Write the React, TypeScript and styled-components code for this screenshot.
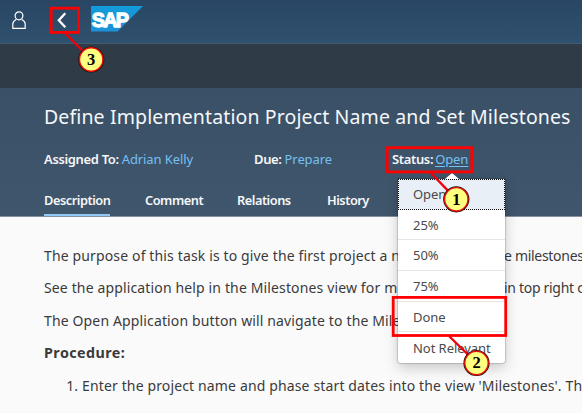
import React from "react";
import styled, { createGlobalStyle } from "styled-components";

const GlobalStyle = createGlobalStyle`
  * { box-sizing: border-box; }
  body { margin: 0; overflow: hidden; background: #fafafa; font-family: "Noto Sans", sans-serif; }
`;

const Page = styled.main`
  position: relative;
  width: 582px;
  height: 413px;
  overflow: hidden;
  background: #fafafa;
`;

const ShellBar = styled.header`
  display: flex;
  align-items: flex-start;
  height: 44px;
  background: linear-gradient(#294764, #2f506e);
  border-bottom: 1px solid #435a70;
`;

const UserIcon = styled.svg`
  width: 16px;
  height: 20px;
  margin: 10px 0 0 11px;
`;

const BackIcon = styled.svg`
  width: 12px;
  height: 18px;
  margin: 11px 0 0 29px;
`;

const Logo = styled.svg`
  width: 53px;
  height: 26px;
  margin: 6px 0 0 23px;
`;

const SubBar = styled.div`
  height: 44px;
  background: #2f3b47;
`;

const ObjectHeader = styled.section`
  height: 129px;
  padding-left: 44px;
  background: linear-gradient(#3a5067, #40566c);
  border-bottom: 1px solid #8492a1;
  color: #f5f7f9;
`;

const Title = styled.h1`
  margin: 0;
  padding-top: 15px;
  height: 56px;
  font-size: 19.5px;
  line-height: 28px;
  font-weight: 400;
  letter-spacing: 0.12px;
  white-space: nowrap;
`;

const Attributes = styled.div`
  display: grid;
  grid-template-columns: 210px 138px 1fr;
  height: 42px;
  padding-top: 6px;
  font-size: 13px;
  line-height: 18px;
  white-space: nowrap;
`;

const Label = styled.span<{ $tight?: boolean }>`
  font-weight: 600;
  letter-spacing: -0.35px;
  margin-right: ${(p) => (p.$tight ? "2px" : "3px")};
`;

const Link = styled.a<{ $active?: boolean }>`
  color: #76c0f2;
  letter-spacing: -0.1px;
  text-decoration: ${(p) => (p.$active ? "underline" : "none")};
  text-underline-offset: 2px;
`;

const Tabs = styled.nav`
  display: grid;
  grid-template-columns: 101px 92px 90px 1fr;
  height: 30px;
`;

const Tab = styled.div<{ $active?: boolean }>`
  justify-self: start;
  height: 30px;
  padding-top: 5px;
  font-size: 12.8px;
  line-height: 18px;
  font-weight: 600;
  letter-spacing: -0.48px;
  border-bottom: 2px solid ${(p) => (p.$active ? "#91c8f6" : "transparent")};
`;

const Content = styled.article`
  padding: 22.5px 0 0 44px;
  color: #3a3a3a;
  font-size: 14px;
  line-height: 32.6px;
  letter-spacing: 0.14px;
  white-space: nowrap;
`;

const Paragraph = styled.p`
  display: grid;
  grid-template-columns: 460px 1fr;
  margin: 0;
  height: 32.6px;
`;

const LineEnd = styled.span`
  letter-spacing: -0.3px;
`;

const Strong = styled.strong`
  display: block;
  height: 32.6px;
  font-size: 14.3px;
  letter-spacing: 0.45px;
`;

const Steps = styled.ol`
  margin: 0;
  padding-left: 38px;
`;

const Popover = styled.div`
  position: absolute;
  left: 398px;
  top: 179px;
  width: 107px;
  height: 184px;
  background: #fff;
  border-radius: 0 0 3px 3px;
  box-shadow: 0 0 1px 1px rgba(0, 0, 0, 0.16), 0 5px 14px rgba(0, 0, 0, 0.2);
  &::before {
    content: "";
    position: absolute;
    left: 47px;
    top: -6px;
    border: 7px solid transparent;
    border-top: 0;
    border-bottom: 6px solid #fff;
  }
`;

const MenuItem = styled.div<{ $selected?: boolean }>`
  height: 30.7px;
  padding: 5px 0 0 15px;
  font-size: 13px;
  line-height: 20px;
  letter-spacing: -0.05px;
  white-space: nowrap;
  color: #4a4a4a;
  background: ${(p) => (p.$selected ? "#e8eff7" : "transparent")};
  border-bottom: 1px solid #e5e5e5;
  ${(p) => (p.$selected ? "border: 1px dotted #111; padding: 4px 0 0 14px;" : "")}
  &:last-child { border-bottom: 0; padding-top: 5.3px; }
`;

const Annotations = styled.svg`
  position: absolute;
  inset: 0;
  width: 582px;
  height: 413px;
  pointer-events: none;
`;

const paragraphs = [
  ["The purpose of this task is to give the first project a nam", "e milestones"],
  ["See the application help in the Milestones view for more", "in top right corner"],
  ["The Open Application button will navigate to the Milestones", ""],
];

const callouts = [
  { n: 3, x: 51.2, y: 8.2, w: 27.3, h: 24.2, from: [65, 33], c: [91.2, 59.5] },
  { n: 1, x: 387.2, y: 147.7, w: 84.6, h: 24.2, from: [430, 172], c: [456.3, 199.3] },
  { n: 2, x: 393.2, y: 297.4, w: 112.5, h: 38.1, from: [449, 336], c: [476.5, 363] },
];

export default function App() {
  return (
    <Page>
      <GlobalStyle />
      <ShellBar>
        <UserIcon viewBox="0 0 16 20" fill="none" stroke="#fff" strokeWidth="1.2">
          <ellipse cx="8" cy="5.8" rx="3.9" ry="4" />
          <path d="M5.3 9.5C3.2 10.5 1.8 12 1.8 14v4.4h12.4V14c0-2-1.4-3.5-3.5-4.5" />
        </UserIcon>
        <BackIcon viewBox="0 0 12 18" fill="none" stroke="#fff" strokeWidth="2.3">
          <path d="M9.3 2.2 2.8 9.2l6.5 7" />
        </BackIcon>
        <Logo viewBox="0 0 53 26">
          <defs>
            <linearGradient id="logoFill" x1="0" y1="0" x2="0" y2="1">
              <stop offset="0" stopColor="#129bdc" />
              <stop offset="1" stopColor="#1d92d6" />
            </linearGradient>
          </defs>
          <path d="M0 0h52L26.5 25.5H0z" fill="url(#logoFill)" />
          <text x="0.8" y="20.5" fill="#fff" stroke="#fff" strokeWidth="1.3" fontFamily="Liberation Sans, sans-serif" fontWeight="700" fontSize="21" letterSpacing="-1.8" textLength="35.5" lengthAdjust="spacingAndGlyphs">SAP</text>
        </Logo>
      </ShellBar>
      <SubBar />
      <ObjectHeader>
        <Title>Define Implementation Project Name and Set Milestones</Title>
        <Attributes>
          <div><Label>Assigned To:</Label><Link>Adrian Kelly</Link></div>
          <div><Label>Due:</Label><Link>Prepare</Link></div>
          <div><Label $tight>Status:</Label><Link $active>Open</Link></div>
        </Attributes>
        <Tabs>
          <Tab $active>Description</Tab>
          <Tab>Comment</Tab>
          <Tab>Relations</Tab>
          <Tab>History</Tab>
        </Tabs>
      </ObjectHeader>
      <Content>
        {paragraphs.map(([start, end]) => (
          <Paragraph key={start}><span>{start}</span><LineEnd>{end}</LineEnd></Paragraph>
        ))}
        <Strong>Procedure:</Strong>
        <Steps><li>Enter the project name and phase start dates into the view 'Milestones'. Th</li></Steps>
      </Content>
      <Popover>
        <MenuItem $selected>Open</MenuItem>
        {["25%", "50%", "75%", "Done", "Not Relevant"].map((t) => <MenuItem key={t}>{t}</MenuItem>)}
      </Popover>
      <Annotations viewBox="0 0 582 413">
        {callouts.map(({ n, x, y, w, h, from, c }) => (
          <g key={n}>
            <rect x={x} y={y} width={w} height={h} fill="none" stroke="#f00" strokeWidth="2.8" />
            <path d={`M${from[0]} ${from[1]}L${c[0]} ${c[1]}`} stroke="#f2000c" strokeWidth="2.4" />
            <circle cx={c[0]} cy={c[1]} r="13.1" fill="#241010" />
            <circle cx={c[0]} cy={c[1]} r="11.7" fill="#ffff80" stroke="#e8100c" strokeWidth="1.4" />
            <text x={c[0]} y={c[1] + 5.3} textAnchor="middle" fontFamily="Liberation Serif, serif" fontWeight="700" fontSize="16.5" fill="#000">{n}</text>
          </g>
        ))}
      </Annotations>
    </Page>
  );
}
